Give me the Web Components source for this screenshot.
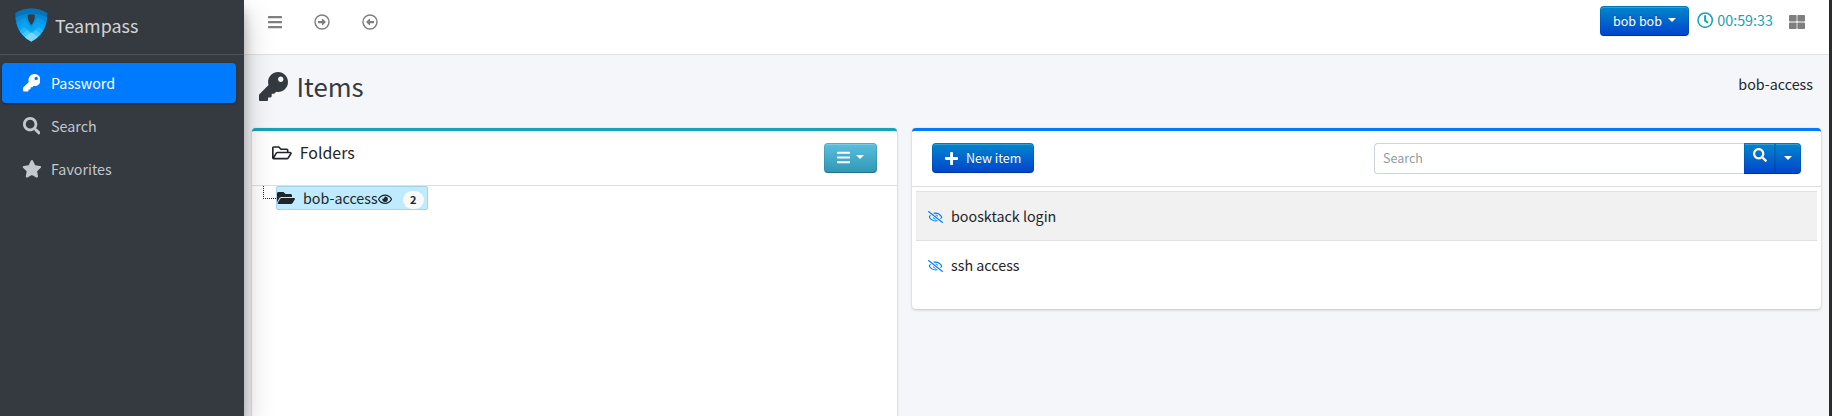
<!DOCTYPE html>
<html lang="en">
<head>
<meta charset="utf-8">
<title>Teampass</title>
<style>
html,body{margin:0;height:100%;overflow:hidden;background:#2b2b2b}
body{font-family:"Noto Sans CJK SC","Open Sans",sans-serif;font-size:14.3px;line-height:24px;color:#212529}
</style>
</head>
<body>
<tp-app></tp-app>
<script>
const ICONS = {
  key:[512,'<path d="M512 176.001C512 273.203 433.202 352 336 352c-11.22 0-22.19-1.062-32.827-3.069l-24.012 27.014A23.999 23.999 0 0 1 261.223 384H224v40c0 13.255-10.745 24-24 24h-40v40c0 13.255-10.745 24-24 24H24c-13.255 0-24-10.745-24-24v-78.059c0-6.365 2.529-12.47 7.029-16.971l161.802-161.802C163.108 213.814 160 195.271 160 176 160 78.798 238.797.001 335.999 0 433.488-.001 512 78.511 512 176.001zM336 128c0 26.51 21.49 48 48 48s48-21.49 48-48-21.49-48-48-48-48 21.49-48 48z"/>'],
  search:[512,'<path d="M505 442.7L405.3 343c-4.5-4.5-10.6-7-17-7H372c27.6-35.3 44-79.7 44-128C416 93.1 322.9 0 208 0S0 93.1 0 208s93.1 208 208 208c48.3 0 92.7-16.4 128-44v16.3c0 6.4 2.5 12.5 7 17l99.7 99.7c9.4 9.4 24.6 9.4 33.9 0l28.3-28.3c9.4-9.4 9.4-24.6.1-34zM208 336c-70.7 0-128-57.2-128-128 0-70.7 57.2-128 128-128 70.7 0 128 57.2 128 128 0 70.7-57.2 128-128 128z"/>'],
  star:[576,'<path d="M259.3 17.8L194 150.2 47.9 171.5c-26.2 3.8-36.7 36.1-17.7 54.6l105.7 103-25 145.5c-4.5 26.3 23.2 46 46.4 33.7L288 439.6l130.7 68.7c23.2 12.2 50.9-7.4 46.4-33.7l-25-145.5 105.7-103c19-18.5 8.5-50.8-17.7-54.6L382 150.2 316.7 17.8c-11.7-23.6-45.6-23.9-57.4 0z"/>'],
  bars:[448,'<rect y="60" width="448" height="72" rx="16"/><rect y="220" width="448" height="72" rx="16"/><rect y="380" width="448" height="72" rx="16"/>'],
  right:[512,'<circle cx="256" cy="256" r="224" fill="none" stroke="currentColor" stroke-width="46"/><path d="M128 232v48c0 7 5 12 12 12h116v60c0 11 13 16 20 8l98-96c5-5 5-12 0-17l-98-95c-7-8-20-3-20 8v60H140c-7 0-12 5-12 12z"/>'],
  left:[512,'<g transform="matrix(-1 0 0 1 512 0)"><circle cx="256" cy="256" r="224" fill="none" stroke="currentColor" stroke-width="46"/><path d="M128 232v48c0 7 5 12 12 12h116v60c0 11 13 16 20 8l98-96c5-5 5-12 0-17l-98-95c-7-8-20-3-20 8v60H140c-7 0-12 5-12 12z"/></g>'],
  clock:[512,'<circle cx="256" cy="256" r="224" fill="none" stroke="currentColor" stroke-width="48"/><path d="M314 354l-85-62c-3-2-5-6-5-10V116c0-7 5-12 12-12h40c7 0 12 5 12 12v142l67 49c5 4 7 11 3 17l-24 32c-4 5-12 6-17 2z"/>'],
  grid:[512,'<rect y="32" width="244" height="210" rx="24"/><rect x="268" y="32" width="244" height="210" rx="24"/><rect y="270" width="244" height="210" rx="24"/><rect x="268" y="270" width="244" height="210" rx="24"/>'],
  plus:[448,'<path d="M416 208H272V64c0-17.7-14.3-32-32-32h-32c-17.7 0-32 14.3-32 32v144H32c-17.7 0-32 14.3-32 32v32c0 17.7 14.3 32 32 32h144v144c0 17.7 14.3 32 32 32h32c17.7 0 32-14.3 32-32V304h144c17.7 0 32-14.3 32-32v-32c0-17.7-14.3-32-32-32z"/>'],
  folder:[576,'<path d="M572.694 292.093L500.27 416.248A63.997 63.997 0 0 1 444.989 448H45.025c-18.523 0-30.064-20.093-20.731-36.093l72.424-124.155A64 64 0 0 1 152 256h399.964c18.523 0 30.064 20.093 20.73 36.093zM152 224h328v-48c0-26.51-21.49-48-48-48H272l-64-64H48C21.49 64 0 85.49 0 112v278.046l69.077-118.418C86.214 242.25 117.989 224 152 224z"/>'],
  folderLine:[576,'<path d="M527.9 224H480v-48c0-26.5-21.5-48-48-48H272l-64-64H48C21.5 64 0 85.5 0 112v288c0 26.5 21.5 48 48 48h400c16.5 0 31.9-8.5 40.7-22.6l79.9-128c20-31.9-3-73.4-40.7-73.4zM48 118c0-3.3 2.7-6 6-6h134.1l64 64H426c3.3 0 6 2.7 6 6v42H152c-16.8 0-32.4 8.8-41.1 23.2L48 351.4zm400 282H72l77.2-128H528z"/>'],
  eye:[576,'<path d="M288 144a110.94 110.94 0 0 0-31.24 5 55.4 55.4 0 0 1 7.24 27 56 56 0 0 1-56 56 55.4 55.4 0 0 1-27-7.24A111.71 111.71 0 1 0 288 144zm284.52 97.4C518.29 135.59 410.93 64 288 64S57.68 135.64 3.48 241.41a32.35 32.35 0 0 0 0 29.19C57.71 376.41 165.07 448 288 448s230.32-71.64 284.52-177.41a32.35 32.35 0 0 0 0-29.19zM288 400c-98.65 0-189.09-55-237.93-144C98.91 167 189.34 112 288 112s189.09 55 237.93 144C477.1 345 386.66 400 288 400z"/>'],
  eyeSlash:[640,'<path d="M634 471L36 3.51A16 16 0 0 0 13.51 6l-10 12.49A16 16 0 0 0 6 41l598 467.49a16 16 0 0 0 22.49-2.49l10-12.49A16 16 0 0 0 634 471zM296.79 146.47l134.79 105.38C429.36 191.91 380.48 144 320 144a112.26 112.26 0 0 0-23.21 2.47zm46.42 219.07L208.42 260.16C210.65 320.09 259.53 368 320 368a113 113 0 0 0 23.21-2.46zM320 112c98.65 0 189.09 55 237.93 144a285.53 285.53 0 0 1-44 60.2l37.74 29.5a333.7 333.7 0 0 0 52.9-75.11 32.35 32.35 0 0 0 0-29.19C550.29 135.59 442.93 64 320 64c-36.7 0-71.71 7-104.63 18.81l46.41 36.29c18.94-4.3 38.34-7.1 58.22-7.1zm0 288c-98.65 0-189.08-55-237.93-144a285.47 285.47 0 0 1 44.05-60.19l-37.74-29.5a333.6 333.6 0 0 0-52.89 75.1 32.35 32.35 0 0 0 0 29.19C89.72 376.41 197.08 448 320 448c36.7 0 71.71-7.05 104.63-18.81l-46.41-36.28C359.28 397.2 339.89 400 320 400z"/>']
};
function define(name, html, setup){
  customElements.define(name, class extends HTMLElement{
    constructor(){
      super();
      const t = document.createElement('template');
      t.innerHTML = html;
      this.attachShadow({mode:'open'}).append(t.content.cloneNode(true));
    }
    connectedCallback(){ if(setup) setup(this, this.shadowRoot); }
  });
}

define('tp-icon', `<style>:host{display:inline-flex;flex:none}svg{display:block;fill:currentColor}</style><svg></svg>`, (el, root) => {
  const [w, body] = ICONS[el.getAttribute('name')] || [512, ''];
  const size = +el.getAttribute('size') || 16;
  const svg = root.querySelector('svg');
  svg.setAttribute('viewBox', `0 0 ${w} 512`);
  svg.setAttribute('height', size);
  svg.setAttribute('width', size * w / 512);
  svg.innerHTML = body;
});

define('tp-logo', `<style>:host{display:block;width:33px;height:34px}svg{display:block}</style>
<svg width="33" height="34" viewBox="0 0 33 34">
<defs><clipPath id="s"><path d="M16.3 .3C11 .5 5 2 .3 5C.3 17 4 27 16.3 33.5C28.6 27 32.3 17 32.3 5C27.6 2 21.600 .5 16.300 .3Z"/></clipPath></defs>
<g clip-path="url(#s)">
<rect width="33" height="34" fill="#0674bd"/>
<path d="M0 10Q16 1 33 10V34H0Z" fill="#0788d3"/>
<path d="M0 17Q5 10 11 10L16.300 18L22 10Q28 10 33 17V34H0Z" fill="#0799eb"/>
<path d="M3 20L10 13L16.300 20L23 13L30 20L16 34Z" fill="#08a5f6"/>
<path d="M3 24L9 19L16.300 24L24 19L30 24L16 34Z" fill="#20b4fb"/>
<path d="M7 26L12 22L16.300 26L21 22L26 26L16 34Z" fill="#49c3fb"/>
<path d="M8 30L16.300 24.500L25 30L16 35Z" fill="#7fd6fb"/>
<path d="M12.600 7Q16.300 5.500 20 7Q20 12 17 16.500H15.600Q12.600 12 12.600 7Z" fill="#343a40"/>
</g></svg>`);

define('tp-nav-item', `<style>
:host{display:flex;align-items:center;height:40px;border-radius:4px;color:#c2c7d0;box-sizing:border-box;padding:0 0 0 16.500px}
:host([active]){background:#007bff;color:#fff;box-shadow:0 1px 3px rgba(0,0,0,.12),0 1px 2px rgba(0,0,0,.24)}
.i{width:26px;display:flex;justify-content:center;margin-right:6.500px}
.t{margin-top:-1px}
</style><span class="i"></span><span class="t"><slot></slot></span>`, (el, root) => {
  const i = document.createElement('tp-icon');
  i.setAttribute('name', el.getAttribute('icon')); i.setAttribute('size', '17.6');
  root.querySelector('.i').replaceChildren(i);
});

define('tp-sidebar', `<style>
:host{display:block;width:244px;height:416px;background:#343a40;position:relative;z-index:2;box-shadow:0 14px 28px rgba(0,0,0,.25),0 10px 10px rgba(0,0,0,.22)}
.brand{height:54px;border-bottom:1px solid #4b545c;display:flex;align-items:center;box-sizing:content-box;color:rgba(255,255,255,.8);font-size:17.900px}
.brand span{margin-top:-5px}
tp-logo{margin:-5px 7px 0 15px}
nav{padding:8px 8px 0 2px;display:grid;gap:3px}
</style>
<div class="brand"><tp-logo></tp-logo><span>Teampass</span></div>
<nav><tp-nav-item icon="key" active>Password</tp-nav-item><tp-nav-item icon="search">Search</tp-nav-item><tp-nav-item icon="star">Favorites</tp-nav-item></nav>`);

define('tp-button', `<style>
:host{display:inline-flex;align-items:center;justify-content:center;box-sizing:border-box;height:30px;border-radius:4px;color:#fff;font-size:12.500px;border:1px solid;border-color:rgba(0,0,0,.1) rgba(0,0,0,.1) rgba(0,0,0,.25);background:linear-gradient(#08c,#04c) border-box;box-shadow:inset 0 1px 0 rgba(255,255,255,.2),0 1px 2px rgba(0,0,0,.05);text-shadow:0 -1px 0 rgba(0,0,0,.25)}
:host([info]){background:linear-gradient(#5bc0de,#2f96b4) border-box}
:host([caret])::after{content:"";border:solid transparent;border-width:4.200px 4.200px 0;border-top-color:#fff;margin:var(--caret,-2px 0 0 6px)}
</style><slot></slot>`);

define('tp-topbar', `<style>
:host{display:flex;height:54px;border-bottom:1px solid #dee2e6;background:#fff;color:#7f7f7f;align-items:flex-start}
.l{display:flex;gap:32px;padding:14px 0 0 24px;flex:1}
.r{display:flex;align-items:center;padding:6px 24px 0 0;height:30px}
tp-button{width:89px;margin-right:8px}
.clock{display:flex;align-items:center;gap:4px;color:#17a2b8;width:92px;white-space:nowrap;height:30px}
.clock tp-icon,.clock span{margin-top:-2px}
.g{margin-top:2px}
</style>
<div class="l"><tp-icon name="bars"></tp-icon><tp-icon name="right"></tp-icon><tp-icon name="left"></tp-icon></div>
<div class="r"><tp-button caret>bob bob</tp-button><div class="clock"><tp-icon name="clock" size="16.3"></tp-icon><span>00:59:33</span></div><tp-icon class="g" name="grid"></tp-icon></div>`);

define('tp-card', `<style>
:host{display:block;box-sizing:border-box;background:#fff;border-radius:4px;border-top:3px solid var(--accent);box-shadow:0 0 1px rgba(0,0,0,.125),0 1px 3px rgba(0,0,0,.2)}
header{display:flex;border-bottom:1px solid rgba(0,0,0,.125);height:var(--head,54px)}
</style><header><slot name="head"></slot></header><slot></slot>`);

define('tp-folders', `<style>
:host{display:block}
tp-card{--accent:#17a2b8;height:320px}
.h{display:flex;flex:1;justify-content:space-between;padding:12px 20px 0}
h3{display:flex;align-items:center;height:22px;margin:0;font-weight:400;font-size:15.900px;gap:8px}
h3 tp-icon{margin-top:-2px}
h3 span{margin-top:-2px}
tp-button{width:53px}
tp-button tp-icon{margin-top:-1px}
.tree{display:flex;padding-left:11px}
.line{width:12px;height:12px;border:dotted #212529;border-width:0 0 1px 1px}
.node{display:flex;align-items:center;box-sizing:border-box;width:152px;height:24px;background:#beebff;border:1px solid #a8d3e6;border-radius:2px;white-space:nowrap}
.node .f{margin-right:8px}
.node .e{margin-top:2px}
.badge{margin:4px 0 0 11px;height:18px;width:21px;border-radius:9px;background:#f8f9fa;font-weight:700;font-size:11px;line-height:17px;text-align:center}
</style>
<tp-card><div class="h" slot="head"><h3><tp-icon name="folderLine" size="17.6"></tp-icon><span>Folders</span></h3><tp-button info caret><tp-icon name="bars" size="15"></tp-icon></tp-button></div>
<div class="tree"><span class="line"></span><div class="node"><tp-icon class="f" name="folder"></tp-icon><span>bob-access</span><tp-icon class="e" name="eye" size="12.6"></tp-icon><span class="badge">2</span></div></div></tp-card>`);

define('tp-item', `<style>
:host{display:flex;align-items:center;box-sizing:border-box;height:48px;padding-left:12px;gap:8px;margin:0 4px}
:host([shade]){background:#f1f1f1;border:solid #dee2e6;border-width:1px 0;height:50px}
tp-icon{color:#007bff;margin-top:2px}
</style><tp-icon name="eyeSlash" size="12"></tp-icon><slot></slot>`);

define('tp-items', `<style>
:host{display:block}
tp-card{--accent:#007bff;--head:55px;height:181px}
.h{display:flex;flex:1;padding:12px 20px 0;font-size:12.500px}
.n{width:102px;gap:8px;margin-right:auto}
.s{box-sizing:border-box;width:370px;height:31px;border:1px solid #ced4da;border-right:0;border-radius:4px 0 0 4px;padding-left:8px;line-height:28px;color:#939ba2}
.a{width:31px;height:31px;border-radius:0}
.a tp-icon{margin-top:-8px}
.b{width:26px;height:31px;border-radius:0 4px 4px 0;--caret:-1px 0 0}
.list{padding-top:4px}
</style>
<tp-card><div class="h" slot="head"><tp-button class="n"><tp-icon name="plus" size="15"></tp-icon>New item</tp-button><div class="s">Search</div><tp-button class="a"><tp-icon name="search" size="14"></tp-icon></tp-button><tp-button class="b" caret></tp-button></div>
<div class="list"><tp-item shade>boosktack login</tp-item><tp-item>ssh access</tp-item></div></tp-card>`);

define('tp-app', `<style>
:host{display:flex;height:416px;width:1829px;overflow:hidden;background:#f4f6f9}
main{flex:1}
.title{display:flex;justify-content:space-between;height:73px;padding:0 16px 0 15px}
h1{display:flex;align-items:flex-start;margin:0;padding-top:17px;font-weight:400;font-size:25.800px;line-height:32px;color:#343a40;gap:8.500px}
h1 span{margin-top:-2px}
.who{padding-top:17px}
.cards{display:grid;grid-template-columns:645px 909px;gap:15px;padding-left:8px;align-items:start}
</style>
<tp-sidebar></tp-sidebar>
<main><tp-topbar></tp-topbar>
<div class="title"><h1><tp-icon name="key" size="29"></tp-icon><span>Items</span></h1><div class="who">bob-access</div></div>
<div class="cards"><tp-folders></tp-folders><tp-items></tp-items></div></main>`);
</script>
</body>
</html>
